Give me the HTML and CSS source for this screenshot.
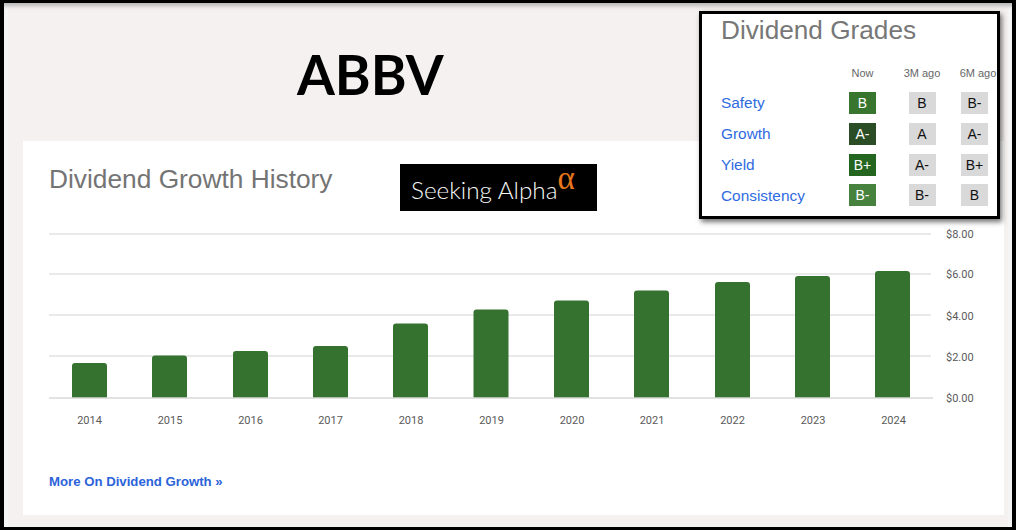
FILE: index.html
```html
<!DOCTYPE html>
<html lang="en">
<head>
<meta charset="utf-8">
<title>ABBV Dividend Growth History</title>
<link rel="stylesheet" href="styles.css">
</head>
<body>
<div class="frame">
  <header class="masthead"><h1 class="ticker">ABBV</h1></header>
  <section class="card">
    <div class="card-head">
      <h2 class="card-title">Dividend Growth History</h2>
      <div class="logo"><span class="logo-name">Seeking Alpha</span><span class="logo-alpha">α</span></div>
    </div>
    <svg class="chart" viewBox="23 211 981 226" width="981" height="226" role="img" aria-label="Dividend growth by year">
      <g class="grid">
        <line x1="49" x2="931" y1="234" y2="234"/>
        <line x1="49" x2="931" y1="274" y2="274"/>
        <line x1="49" x2="931" y1="315" y2="315"/>
        <line x1="49" x2="931" y1="356" y2="356"/>
      </g>
      <g class="bars">
        <path d="M72 398V366a3 3 0 0 1 3-3h29a3 3 0 0 1 3 3V398z"/>
        <path d="M152 398V358.500a3 3 0 0 1 3-3h29a3 3 0 0 1 3 3V398z"/>
        <path d="M233 398V354a3 3 0 0 1 3-3h29a3 3 0 0 1 3 3V398z"/>
        <path d="M313 398V349a3 3 0 0 1 3-3h29a3 3 0 0 1 3 3V398z"/>
        <path d="M393 398V326.500a3 3 0 0 1 3-3h29a3 3 0 0 1 3 3V398z"/>
        <path d="M473.500 398V312.500a3 3 0 0 1 3-3h29a3 3 0 0 1 3 3V398z"/>
        <path d="M554 398V303.500a3 3 0 0 1 3-3h29a3 3 0 0 1 3 3V398z"/>
        <path d="M634 398V293.500a3 3 0 0 1 3-3h29a3 3 0 0 1 3 3V398z"/>
        <path d="M715 398V285a3 3 0 0 1 3-3h29a3 3 0 0 1 3 3V398z"/>
        <path d="M795 398V279a3 3 0 0 1 3-3h29a3 3 0 0 1 3 3V398z"/>
        <path d="M875 398V274a3 3 0 0 1 3-3h29a3 3 0 0 1 3 3V398z"/>
      </g>
      <line class="baseline" x1="49" x2="933" y1="398" y2="398"/>
      <g class="y-labels">
        <text x="946" y="238">$8.00</text>
        <text x="946" y="278">$6.00</text>
        <text x="946" y="320">$4.00</text>
        <text x="946" y="361">$2.00</text>
        <text x="946" y="402">$0.00</text>
      </g>
      <g class="x-labels">
        <text x="89.500" y="424">2014</text>
        <text x="170" y="424">2015</text>
        <text x="250.500" y="424">2016</text>
        <text x="330.500" y="424">2017</text>
        <text x="411" y="424">2018</text>
        <text x="491.500" y="424">2019</text>
        <text x="572" y="424">2020</text>
        <text x="652" y="424">2021</text>
        <text x="732.500" y="424">2022</text>
        <text x="813" y="424">2023</text>
        <text x="893.500" y="424">2024</text>
      </g>
    </svg>
    <a class="more" href="#">More On Dividend Growth »</a>
  </section>
  <aside class="grades">
    <h2 class="grades-title">Dividend Grades</h2>
    <div class="grades-grid">
      <span></span><span class="col-head">Now</span><span class="col-head">3M ago</span><span class="col-head col-head-last">6M ago</span>
      <a class="metric" href="#">Safety</a><span class="grade grade-b">B</span><span class="grade past">B</span><span class="grade past">B-</span>
      <a class="metric" href="#">Growth</a><span class="grade grade-am">A-</span><span class="grade past">A</span><span class="grade past">A-</span>
      <a class="metric" href="#">Yield</a><span class="grade grade-bp">B+</span><span class="grade past">A-</span><span class="grade past">B+</span>
      <a class="metric" href="#">Consistency</a><span class="grade grade-bm">B-</span><span class="grade past">B-</span><span class="grade past">B</span>
    </div>
  </aside>
</div>
</body>
</html>
```
FILE: styles.css
```css
* { box-sizing: border-box; }
html, body { margin: 0; padding: 0; }
body { font-family: "Liberation Sans", Arial, sans-serif; background: #fff; }

.frame {
  position: relative;
  width: 1016px;
  height: 530px;
  overflow: hidden;
  display: flex;
  flex-direction: column;
  background: #f4f1f0;
  border-style: solid;
  border-color: #000;
  border-width: 3px 4px;
  box-shadow: inset 0 5px 4px -2px #b5b5b5, inset 4px 0 3px -1px #fbfbfb, inset -4px 0 3px -1px #fbfbfb;
}

.masthead {
  height: 138px;
  flex: none;
  display: flex;
  align-items: center;
  padding-left: 293px;
  padding-top: 4px;
}
.ticker {
  margin: 0;
  font-family: Lato, sans-serif;
  font-weight: 700;
  font-size: 54.500px;
  line-height: 1;
  color: #000;
}

.card {
  height: 374px;
  margin: 0 8px 0 19px;
  background: #fff;
  display: flex;
  flex-direction: column;
}
.card-head {
  display: flex;
  align-items: flex-start;
  padding: 23px 0 0 26px;
}
.card-title {
  margin: 0;
  width: 351px;
  flex: none;
  font-weight: 400;
  font-size: 26.300px;
  line-height: 30px;
  color: #747474;
}
.logo {
  width: 197px;
  height: 47px;
  flex: none;
  background: #000;
  display: flex;
  padding-left: 11px;
}
.logo-name {
  font-family: Lato, sans-serif;
  font-weight: 300;
  font-size: 24.300px;
  line-height: 1;
  margin-top: 14px;
  color: #f7f7f7;
}
.logo-alpha {
  font-family: "Liberation Serif", serif;
  font-size: 33px;
  line-height: 1;
  margin-top: -2px;
  color: #e8761c;
}

.chart { display: block; flex: none; }
.grid line { stroke: #e2e2e2; stroke-width: 1.5; }
.baseline { stroke: #d9d9d9; stroke-width: 1.5; }
.bars path { fill: #36722f; }
.y-labels text, .x-labels text {
  font-family: Roboto, sans-serif;
  font-size: 11px;
  fill: #5a5a5a;
}
.x-labels text { text-anchor: middle; }

.more {
  margin: 37px 0 0 26px;
  font-size: 13.200px;
  line-height: 16px;
  font-weight: 700;
  color: #2b63d9;
  text-decoration: none;
}

.grades {
  position: absolute;
  left: 695px;
  top: 8px;
  width: 301px;
  height: 208px;
  background: #fff;
  border: 3px solid #000;
  box-shadow: 2px 3px 5px rgba(0, 0, 0, 0.55);
  padding: 1px 0 0 19px;
  overflow: hidden;
}
.grades-title {
  margin: 0;
  font-weight: 400;
  font-size: 26.200px;
  line-height: 30px;
  color: #777;
}
.grades-grid {
  margin-top: 16px;
  display: grid;
  grid-template-columns: 112px 59px 60px 45px;
  grid-template-rows: repeat(5, 22px);
  row-gap: 9px;
  justify-items: center;
  align-items: center;
}
.grades-grid > :nth-child(-n+4) { margin-top: 2px; }
.grades-grid > :nth-child(n+18) { align-self: start; margin-top: -1px; }
.col-head {
  font-size: 11px;
  color: #666;
  white-space: nowrap;
}
.col-head-last { margin-left: 7px; }
.metric {
  justify-self: start;
  font-size: 15.400px;
  color: #2f6be0;
  text-decoration: none;
}
.grade {
  width: 27px;
  height: 22px;
  display: flex;
  align-items: center;
  justify-content: center;
  font-size: 14px;
  color: #fff;
}
.past { background: #d9d9d9; color: #111; }
.grade-b { background: #38752f; }
.grade-am { background: #2a4d25; }
.grade-bp { background: #24651f; }
.grade-bm { background: #47823f; }
```
